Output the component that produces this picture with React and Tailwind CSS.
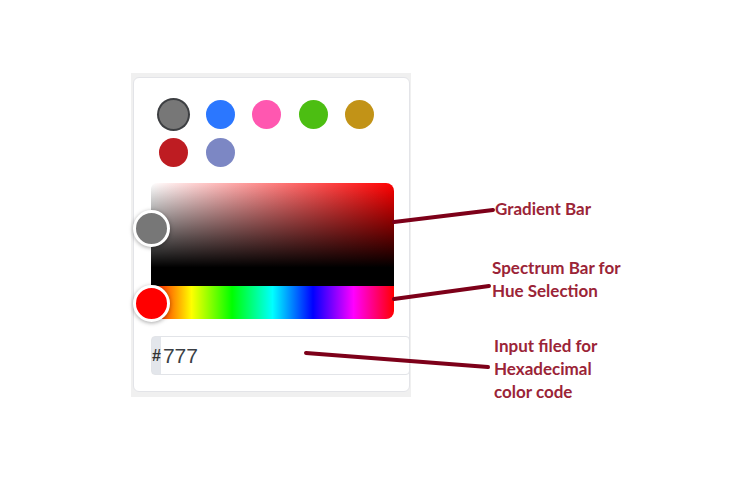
const SWATCHES = [
  { color: '#777777', selected: true },
  { color: '#2b77ff' },
  { color: '#ff57b0' },
  { color: '#4cbe12' },
  { color: '#c29317' },
  { color: '#be1c22' },
  { color: '#7c87c4' },
];

function Swatch({ color, selected }) {
  return (
    <div
      className={
        selected
          ? 'h-[29px] w-[29px] rounded-full shadow-[0_0_0_2px_#3d3f42]'
          : 'h-[29px] w-[29px] rounded-full'
      }
      style={{ backgroundColor: color }}
    />
  );
}

function ColorPicker() {
  return (
    <div className="ml-[131px] mt-[73px] w-[280px] bg-[#f0f0f0] pb-[5px] pl-[2px] pr-[1px] pt-[4px]">
      <div className="w-[277px] rounded-[6px] border border-[#e3e4e8] bg-white pb-[16px] pl-[17px] pt-[22px]">
        {/* preset swatches */}
        <div className="ml-[8px] grid grid-cols-[repeat(5,29px)] gap-x-[17.5px] gap-y-[9px]">
          {SWATCHES.map((s) => (
            <Swatch key={s.color} {...s} />
          ))}
        </div>

        {/* saturation area + hue strip */}
        <div className="relative mt-[16px] w-[243px]">
          <div className="h-[103px] rounded-tl-[6px] rounded-tr-[8px] bg-[linear-gradient(to_top,#000_18%,rgba(0,0,0,0)),linear-gradient(to_right,#fff,#f00)]" />
          <div className="h-[33px] rounded-b-[8px] bg-[linear-gradient(to_right,#f00,#ff0,#0f0,#0ff,#00f,#f0f,#f00)]" />
          <div className="absolute left-[-18.5px] top-[27px] h-[37px] w-[37px] rounded-full border-[3px] border-white bg-[#777777] shadow-[0_1px_4px_rgba(0,0,0,0.35)]" />
          <div className="absolute left-[-18.5px] top-[101.5px] h-[37px] w-[37px] rounded-full border-[3px] border-white bg-[#ff0000] shadow-[0_1px_4px_rgba(0,0,0,0.35)]" />
        </div>

        {/* hex input */}
        <div className="mt-[17px] flex h-[39px] w-[259px] items-center rounded-[4px] border border-[#e2e4e8] bg-[linear-gradient(to_right,#e3e6eb_9px,#fff_9px)]">
          <span className="text-[16px] font-bold leading-none text-[#333]">#</span>
          <span className="ml-[2px] text-[21px] leading-none text-[#3b3f45]">777</span>
        </div>
      </div>
    </div>
  );
}

function Annotations() {
  const label = "absolute font-['Lato',sans-serif] text-[17px] font-bold leading-[23px] text-[#9b2437]";
  return (
    <>
      <svg className="pointer-events-none absolute inset-0" width="729" height="491">
        <g stroke="#7d0019" strokeWidth="4" strokeLinecap="round">
          <line x1="394" y1="222" x2="493" y2="210" />
          <line x1="394" y1="299" x2="489" y2="286" />
          <line x1="306" y1="353" x2="488" y2="367" />
        </g>
      </svg>
      <div className={label + ' left-[495px] top-[197px]'}>Gradient Bar</div>
      <div className={label + ' left-[492px] top-[256px]'}>
        Spectrum Bar for
        <br />
        Hue Selection
      </div>
      <div className={label + ' left-[494px] top-[334px]'}>
        Input filed for
        <br />
        Hexadecimal
        <br />
        color code
      </div>
    </>
  );
}

export default function App() {
  return (
    <div className="relative h-[491px] w-[729px] overflow-hidden bg-white font-['Liberation_Sans',sans-serif]">
      <ColorPicker />
      <Annotations />
    </div>
  );
}
